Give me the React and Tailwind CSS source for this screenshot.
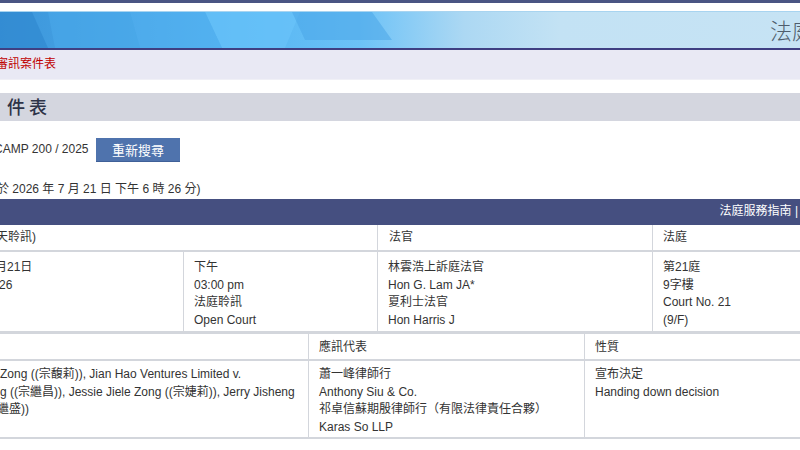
export default function App() {
  const cellBorder = "border-[#d3d6dc]";

  return (
    <div className="w-[800px] h-[450px] overflow-hidden bg-white text-[12px] leading-[17.5px] text-[#333] font-['Liberation_Sans','Noto_Sans_CJK_TC',sans-serif]">
      {/* top strip */}
      <div className="h-[3px] bg-[#4a5583]" />
      <div className="h-[8px] bg-white" />

      {/* banner */}
      <div className="relative h-[39px] overflow-hidden border-t border-[#a8d4f0] border-b-2 border-b-[#3f3f82]">
        <svg className="absolute inset-0 w-full h-full" viewBox="0 0 800 36" preserveAspectRatio="none">
          <defs>
            <linearGradient id="bn" x1="0" x2="1" y1="0" y2="0">
              <stop offset="0" stopColor="#3b95da" />
              <stop offset="0.3" stopColor="#55b5f2" />
              <stop offset="0.45" stopColor="#6cc2f7" />
              <stop offset="0.58" stopColor="#acd8f3" />
              <stop offset="0.7" stopColor="#c3e2f4" />
              <stop offset="1" stopColor="#c6e3f4" />
            </linearGradient>
          </defs>
          <rect x="0" y="0" width="800" height="36" fill="url(#bn)" />
          <polygon points="0,0 32,0 48,36 0,36" fill="#3189d0" opacity="0.7" />
          <polygon points="48,0 130,0 140,36 55,36" fill="#4aa8ea" opacity="0.6" />
          <polygon points="205,0 300,0 285,36 222,36" fill="#6ac3fa" opacity="0.7" />
          <polygon points="292,0 372,0 392,28 305,28" fill="#4aa6e8" opacity="0.55" />
          <polygon points="130,0 205,0 222,36 140,36" fill="#52b0ef" opacity="0.5" />
        </svg>
        <div className="relative flex h-full items-center pl-[770px] whitespace-nowrap">
          <span className="text-[22px] font-light text-[#4f5d6c] font-['Noto_Sans_CJK_TC',sans-serif]">法庭審訊案件表</span>
        </div>
      </div>

      {/* breadcrumb band */}
      <div className="h-[30px] bg-[#e9e9f4] border-b border-[#f0f0f6] flex items-center whitespace-nowrap overflow-hidden">
        <span className="-ml-[4px] -mt-[4px] text-[#c00000] font-['Noto_Sans_CJK_TC',sans-serif]">審訊案件表</span>
      </div>

      <div className="h-[13px]" />

      {/* section title */}
      <div className="h-[28px] bg-[#d4d6df] flex items-center pl-[7px]">
        <span className="text-[18px] font-medium text-[#2e3348] font-['Noto_Sans_CJK_TC',sans-serif]">件 表</span>
      </div>

      {/* search line */}
      <div className="h-[17px]" />
      <div className="flex items-center h-[24px] whitespace-nowrap">
        <span className="-ml-[6px] w-[102px]">CAMP 200 / 2025</span>
        <button className="w-[84px] h-[24px] bg-[#4f73ad] border-b border-[#3f6098] text-white text-[13px] font-['Noto_Sans_CJK_TC',sans-serif]">
          重新搜尋
        </button>
      </div>

      <div className="h-[37px] flex items-end pb-[1px] whitespace-nowrap">
        <span className="-ml-[3px]">於 2026 年 7 月 21 日 下午 6 時 26 分)</span>
      </div>

      {/* navy bar */}
      <div className="h-[26px] bg-[#454f80] flex items-center justify-end pr-[2px] text-white whitespace-nowrap">
        <span>法庭服務指南 |</span>
      </div>

      {/* table 1 header */}
      <div className={`flex h-[27px] border-b-2 ${cellBorder}`}>
        <div className="w-[377px] flex items-center overflow-hidden whitespace-nowrap">
          <span className="-ml-[4px]">天聆訊)</span>
        </div>
        <div className={`w-[275px] flex items-center pl-[11px] border-l ${cellBorder}`}>法官</div>
        <div className={`flex-1 flex items-center pl-[10px] border-l ${cellBorder}`}>法庭</div>
      </div>

      {/* table 1 row */}
      <div className={`flex h-[81px] border-b-2 ${cellBorder}`}>
        <div className="w-[183px] pt-[7px] overflow-hidden whitespace-nowrap">
          <div className="-ml-[5px]">月21日</div>
          <div className="-ml-[1px]">26</div>
        </div>
        <div className={`w-[194px] pt-[7px] pl-[10px] border-l ${cellBorder}`}>
          <div>下午</div>
          <div>03:00 pm</div>
          <div>法庭聆訊</div>
          <div>Open Court</div>
        </div>
        <div className={`w-[275px] pt-[7px] pl-[10px] border-l ${cellBorder}`}>
          <div>林雲浩上訴庭法官</div>
          <div>Hon G. Lam JA*</div>
          <div>夏利士法官</div>
          <div>Hon Harris J</div>
        </div>
        <div className={`flex-1 pt-[7px] pl-[10px] border-l ${cellBorder}`}>
          <div>第21庭</div>
          <div>9字樓</div>
          <div>Court No. 21</div>
          <div>(9/F)</div>
        </div>
      </div>

      {/* table 2 header */}
      <div className={`flex h-[28px] border-t ${cellBorder} border-b-2`}>
        <div className="w-[308px]" />
        <div className={`w-[276px] flex items-center pl-[10px] pt-[3px] border-l ${cellBorder}`}>應訊代表</div>
        <div className={`flex-1 flex items-center pl-[10px] pt-[3px] border-l ${cellBorder}`}>性質</div>
      </div>

      {/* table 2 row */}
      <div className={`flex h-[78px] border-b-2 ${cellBorder}`}>
        <div className="w-[308px] pt-[5px] overflow-hidden whitespace-nowrap">
          <div>Zong ((宗馥莉)), Jian Hao Ventures Limited v.</div>
          <div>g ((宗繼昌)), Jessie Jiele Zong ((宗婕莉)), Jerry Jisheng</div>
          <div className="-ml-[15px]">宗繼盛))</div>
        </div>
        <div className={`w-[276px] pt-[5px] pl-[10px] border-l ${cellBorder} whitespace-nowrap`}>
          <div>蕭一峰律師行</div>
          <div>Anthony Siu &amp; Co.</div>
          <div>祁卓信蘇期殷律師行（有限法律責任合夥）</div>
          <div>Karas So LLP</div>
        </div>
        <div className={`flex-1 pt-[5px] pl-[10px] border-l ${cellBorder}`}>
          <div>宣布決定</div>
          <div>Handing down decision</div>
        </div>
      </div>
    </div>
  );
}
